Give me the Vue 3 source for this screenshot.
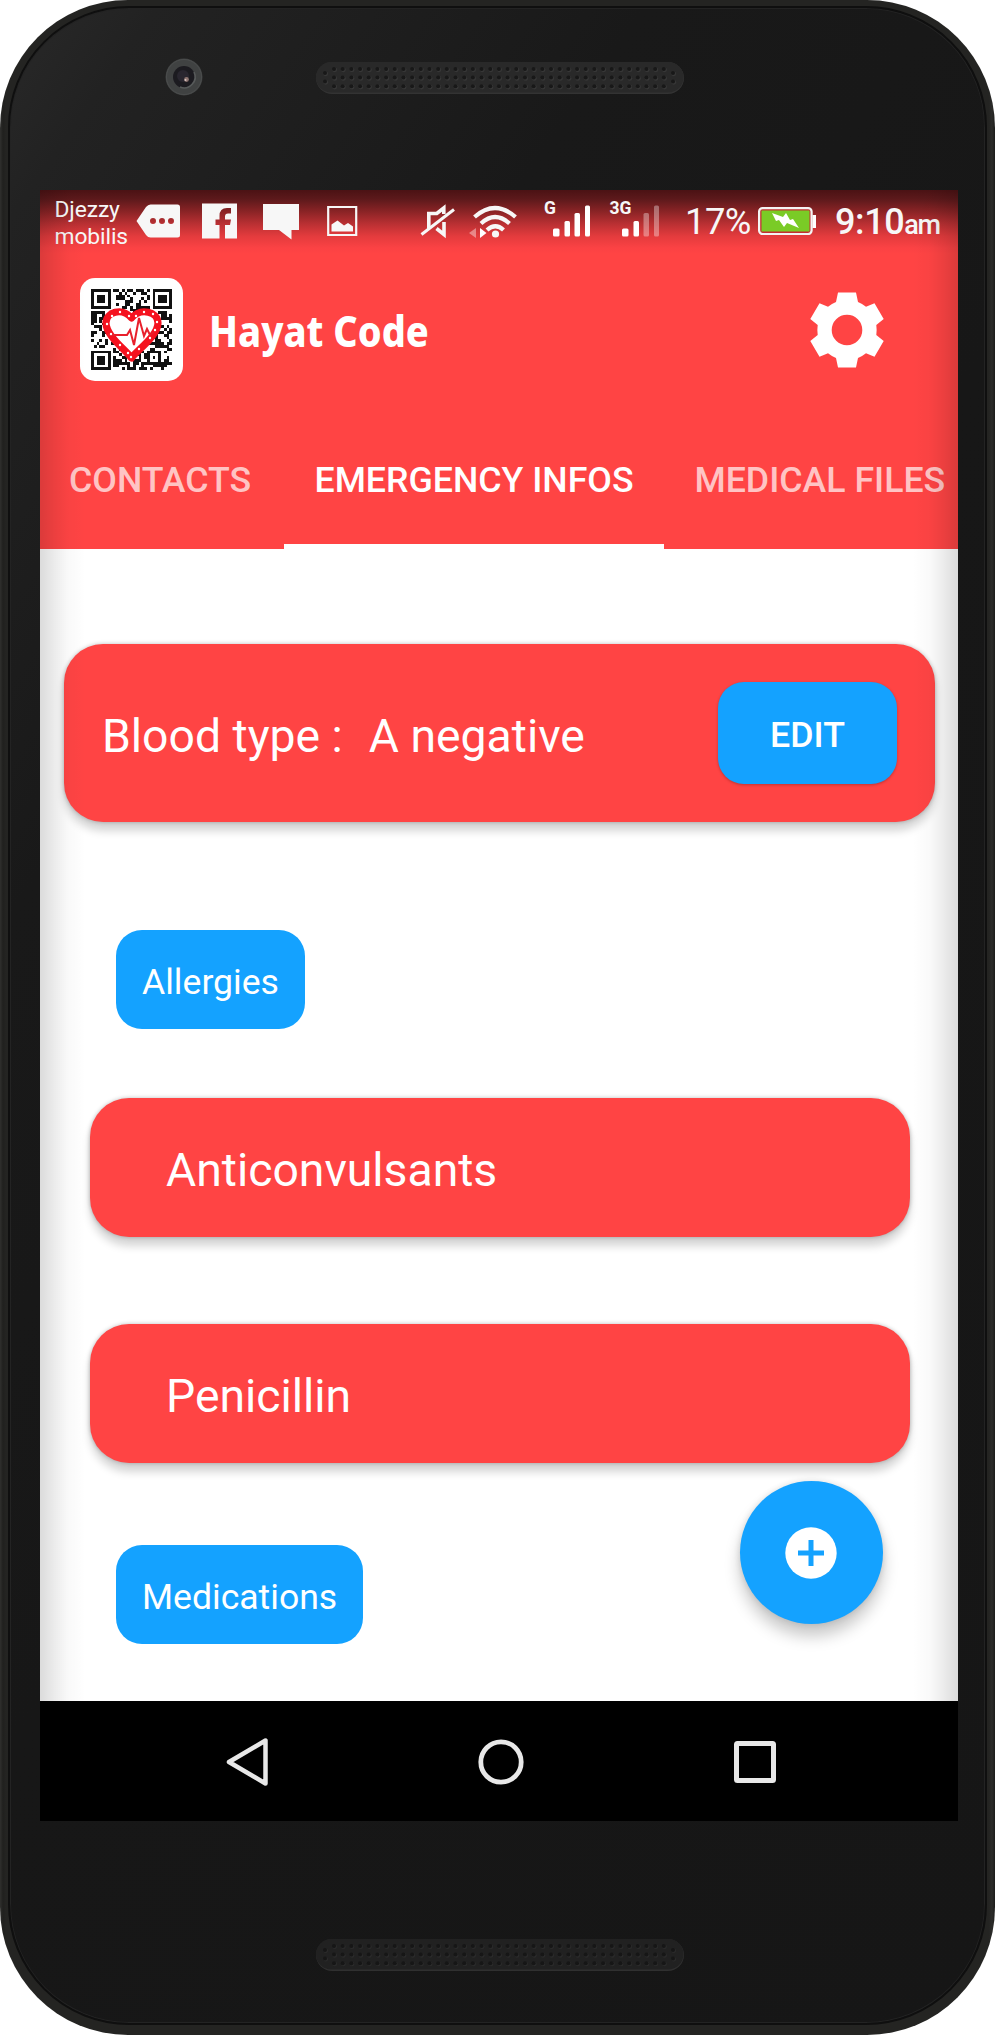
<script setup>
const speakerDots = []
for (let c = 0; c < 39; c++) {
  for (let r = 0; r < 3; r++) speakerDots.push([18 + c * 8.68, 7 + r * 8.6])
}
speakerDots.push([9, 11], [9, 19.5], [357, 11], [357, 19.5])

const SIZE = 29
function finder(x, y) {
  const ring = Math.max(Math.abs(x - 3), Math.abs(y - 3))
  return ring === 3 || ring <= 1
}
function module(x, y) {
  if (x < 8 && y < 8) return x < 7 && y < 7 && finder(x, y)
  if (x > 20 && y < 8) return x > 21 && y < 7 && finder(x - 22, y)
  if (x < 8 && y > 20) return x < 7 && y > 21 && finder(x, y - 22)
  const a = Math.max(Math.abs(x - 22), Math.abs(y - 24))
  if (a <= 2) return a !== 1
  const h = Math.sin(x * 12.9898 + y * 78.233 + 3.1) * 43758.5453
  return h - Math.floor(h) > 0.48
}
let qrPath = ''
for (let y = 0; y < SIZE; y++) {
  for (let x = 0; x < SIZE; x++) if (module(x, y)) qrPath += `M${x} ${y}h1v1h-1z`
}

const tabs = [
  { label: 'CONTACTS', active: false },
  { label: 'EMERGENCY INFOS', active: true },
  { label: 'MEDICAL FILES', active: false },
]
const allergies = ['Anticonvulsants', 'Penicillin']
const heartDots = [[9, 7], [17, 3], [26, 7], [33, 7], [41, 3], [50, 5], [54, 13], [4, 15], [8, 25], [17, 36], [25, 44], [28, 48], [36, 40], [47, 29], [52, 21]]
</script>

<template>
  <div class="phone">
    <div class="face">
      <div class="bezel top">
        <svg class="camera" width="38" height="38" viewBox="0 0 38 38">
          <circle cx="19" cy="19" r="18.5" fill="#404242" />
          <circle cx="19" cy="19" r="17.5" fill="none" stroke="#4b4d4d" stroke-width="1" />
          <circle cx="19" cy="19" r="11" fill="#1c1b20" />
          <path d="M29 14a11 11 0 0 1-14 15" fill="none" stroke="#585b5b" stroke-width="1.6" />
          <circle cx="18" cy="18" r="6" fill="#29262f" />
          <circle cx="21.5" cy="21.5" r="2.4" fill="#8d7470" />
          <circle cx="20.5" cy="22" r="1" fill="#d8c8c4" />
        </svg>
        <svg class="speaker" width="368" height="32" viewBox="0 0 368 32">
          <rect width="368" height="32" rx="16" fill="#333" />
          <rect width="367.500" height="30.500" rx="15.200" fill="#292929" />
          <g v-for="(d, i) in speakerDots" :key="i">
            <circle :cx="d[0] + .7" :cy="d[1] + .8" r="2.4" fill="#373737" />
            <circle :cx="d[0]" :cy="d[1]" r="2" fill="#181818" />
          </g>
        </svg>
      </div>

      <div class="screen">
        <header class="header">
          <div class="status">
            <div class="carrier">Djezzy<br />mobilis</div>
            <svg class="left-icons" width="222" height="40" viewBox="136 200 222 40">
              <path fill="#f7f7f7" fill-rule="evenodd" d="M136.500 221l9.500-14q2-2.500 4.500-2.500h27q2.500 0 2.500 2.500v28q0 2.500-2.500 2.500h-27q-2.500 0-4.500-2.500zM156 221a3 3 0 1 0-6 0 3 3 0 0 0 6 0zM165 221a3 3 0 1 0-6 0 3 3 0 0 0 6 0zM174 221a3 3 0 1 0-6 0 3 3 0 0 0 6 0z" />
              <path fill="#f7f7f7" fill-rule="evenodd" d="M202 203.500h35v35h-12v-13.500h5l1-5.500h-6v-3q0-3 3-3h3v-5.500h-4q-7.500 0-7.500 8v3.500h-4v5.500h4v13.500h-17.500z" />
              <path fill="#f7f7f7" d="M263 204h36v26h-7.500v9.500l-12.500-9.500h-16z" />
              <path fill="none" stroke="#f7f7f7" stroke-width="2.200" d="M328.200 207h28v28h-28z" />
              <path fill="#f7f7f7" d="M331.500 231.500v-7l6-4 6.500 5 4-2.500 5 3.500v5z" />
            </svg>
            <svg class="right-icons" width="242" height="42" viewBox="420 198 242 42">
              <g fill="none" stroke="#f7f7f7" stroke-width="3.600">
                <path d="M428.800 229v-15.500h8l7-5.500v6M444 222v12.500l-7.500-6" />
                <path d="M421.500 234.500L454 209.500" stroke-width="3" />
                <g stroke-width="4.200">
                  <path d="M474.500 217q20.500-18 41 0" />
                  <path d="M481 223.500q14-13 28.500 0" />
                  <path d="M487 230q8.500-7.500 16.500 0" />
                </g>
              </g>
              <circle cx="495.500" cy="234" r="3.600" fill="#f7f7f7" />
              <path d="M480 228l6.500 5-6.500 5z" fill="#fff" />
              <path d="M476 228l-7 5 7 5z" fill="#fff" opacity=".4" />
              <g fill="#fff">
                <rect x="553" y="228.500" width="6.500" height="8" rx="1.500" />
                <rect x="564.500" y="221" width="5.500" height="15.500" rx="1.500" />
                <rect x="574.500" y="213" width="5.500" height="23.500" rx="1.500" />
                <rect x="585" y="205.500" width="5" height="31" rx="1.500" />
                <rect x="622" y="228.500" width="6.500" height="8" rx="1.500" />
                <rect x="633.500" y="221" width="5.500" height="15.500" rx="1.500" />
                <rect x="643.500" y="213" width="5.500" height="23.500" rx="1.500" opacity=".35" />
                <rect x="654" y="205.500" width="5" height="31" rx="1.500" opacity=".35" />
              </g>
              <text class="net" x="544" y="213.500">G</text>
              <text class="net" x="609.500" y="213.500">3G</text>
            </svg>
            <div class="percent">17%</div>
            <svg class="battery" width="58" height="28" viewBox="0 0 58 28">
              <rect x="1.100" y="1.100" width="52.500" height="26" rx="3.500" fill="#c32e31" stroke="#f4f4f4" stroke-width="2.200" />
              <rect x="3.500" y="3.500" width="48" height="21" fill="#7acb26" />
              <path d="M54.500 8h3.500v13h-3.500z" fill="#fff" />
              <path d="M14 6l11 4 3-4 4 7 3-1 6 9-12-5-3 4-5-7-3 1z" fill="#fff" />
            </svg>
            <div class="time">9:10<span>am</span></div>
          </div>

          <div class="appbar">
            <svg class="logo" width="103" height="103" viewBox="0 0 103 103">
              <rect width="103" height="103" rx="15" fill="#fff" />
              <path transform="translate(11 11) scale(2.8)" :d="qrPath" fill="#111" shape-rendering="crispEdges" />
              <g transform="translate(23 31)">
                <path d="M28.500 49C24 42 3 27 3 14 3 3 19-2 28.500 9 38-2 55 3 55 14 55 27 33 42 28.500 49z" fill="#fff" stroke="#f5121f" stroke-width="7.200" stroke-linejoin="round" />
                <path d="M5 26h19l3-5 4 15 5-27 5 18 3-7 3 6 4-3" fill="none" stroke="#e8202c" stroke-width="2" />
                <circle v-for="(d, i) in heartDots" :key="i" :cx="d[0]" :cy="d[1]" r="1.200" fill="#fff" />
              </g>
            </svg>
            <h1>Hayat Code</h1>
            <svg class="gear" width="76" height="76" viewBox="-38 -38 76 76">
              <path fill="#fff" fill-rule="evenodd" d="M-9-37.500H9L11-28Q15-26.500 19-23.300L27.500-26.700 36.700-11 29.300-5Q30 0 29.300 5L36.700 11 27.500 26.700 19 23.300Q15 26.500 11 28L9 37.500H-9L-11 28Q-15 26.500-19 23.300L-27.500 26.700-36.700 11-29.300 5Q-30 0-29.300-5L-36.700-11-27.500-26.700-19-23.300Q-15-26.500-11-28ZM15.300 0a15.300 15.300 0 1 0-30.600 0 15.300 15.300 0 0 0 30.600 0z" />
            </svg>
          </div>

          <nav class="tabs">
            <div v-for="t in tabs" :key="t.label" class="tab" :class="{ active: t.active }">{{ t.label }}</div>
          </nav>
        </header>

        <main class="content">
          <section class="card blood">
            <span class="blood-text">Blood type :<b>A negative</b></span>
            <button class="edit">EDIT</button>
          </section>
          <div class="chip first">Allergies</div>
          <section v-for="a in allergies" :key="a" class="card item">{{ a }}</section>
          <div class="chip second">Medications</div>
          <button class="fab">
            <svg width="52" height="52" viewBox="0 0 52 52">
              <circle cx="26" cy="26" r="25.700" fill="#fff" />
              <path d="M26 13v26M13 26h26" stroke="#14a2ff" stroke-width="5" />
            </svg>
          </button>
        </main>
        <div class="edge-shade"></div>

        <div class="navbar">
          <svg width="42" height="50" viewBox="0 0 42 50"><path d="M39.500 3.500v43L3 25z" fill="none" stroke="#e8e8e8" stroke-width="4.500" stroke-linejoin="round" /></svg>
          <svg width="46" height="46" viewBox="0 0 46 46"><circle cx="23" cy="23" r="20.200" fill="none" stroke="#e8e8e8" stroke-width="4.800" /></svg>
          <svg width="42" height="42" viewBox="0 0 42 42"><rect x="2.500" y="2.500" width="37" height="37" rx="1" fill="none" stroke="#e8e8e8" stroke-width="5" /></svg>
        </div>
      </div>

      <div class="bezel bottom">
        <svg class="speaker" width="368" height="32" viewBox="0 0 368 32">
          <rect width="368" height="32" rx="16" fill="#303030" />
          <rect width="367.500" height="30.500" rx="15.200" fill="#212121" />
          <g v-for="(d, i) in speakerDots" :key="i">
            <circle :cx="d[0] + .7" :cy="d[1] + .8" r="2.300" fill="#2b2b2b" />
            <circle :cx="d[0]" :cy="d[1]" r="2" fill="#161616" />
          </g>
        </svg>
      </div>
    </div>
  </div>
</template>

<style>
html, body { background: #fff; overflow: hidden; }
</style>

<style scoped>
.phone {
  box-sizing: border-box;
  width: 995px;
  height: 2035px;
  padding: 6px 8px 10px;
  border-radius: 128px;
  background: linear-gradient(90deg, #30302e 0, #20201e 3px, #242422 6px, #242422 989px, #2c2c2a 992px, #1c1c1a 995px);
  font-family: Roboto, "Liberation Sans", sans-serif;
  color: #fff;
}
.face {
  box-sizing: border-box;
  width: 979px;
  height: 2019px;
  border: 2px solid #0f0f0f;
  border-radius: 121px;
  box-shadow: inset 0 0 0 1px #232323;
  background: linear-gradient(125deg, #292929 0, #222 120px, #191919 520px, #171717 1000px, #161616 100%);
  padding: 0 30px;
}
.bezel { display: flex; align-items: flex-start; }
.top { height: 182px; }
.camera { margin: 50px 0 0 125px; }
.top .speaker { margin: 54px 0 0 113px; }
.bottom { justify-content: center; }
.bottom .speaker { margin-top: 118px; margin-left: 5px; }
.screen { position: relative; width: 918px; height: 1631px; background: #fff; overflow: hidden; }
.header {
  height: 359px;
  background: linear-gradient(180deg, #4b1214 0, #5c191b 9px, #8c2426 22px, #ba3033 34px, #e33b3d 46px, #fb4244 58px, #ff4444 64px);
}
.status { display: flex; align-items: flex-start; height: 64px; color: #f7f7f7; }
.carrier { width: 81px; margin: 6px 0 0 14.500px; font-size: 22.800px; line-height: 27px; letter-spacing: -.1px; }
.left-icons { flex: none; margin: 10px 0 0 .5px; }
.right-icons { flex: none; margin: 8px 0 0 62px; }
.net { font: 700 17.500px Roboto, sans-serif; fill: #f7f7f7; }
.percent { width: 74px; margin: 11px 0 0 23px; font-size: 36.300px; line-height: 42px; letter-spacing: -.5px; white-space: nowrap; }
.battery { margin: 17px 0 0 -1px; flex: none; }
.time { margin: 11px 0 0 19px; font-size: 36px; line-height: 42px; font-weight: 500; letter-spacing: -.4px; white-space: nowrap; }
.time span { font-size: 27px; letter-spacing: -1.300px; }
.appbar { display: flex; align-items: center; height: 151px; }
.logo { margin: 0 0 0 40px; }
h1 {
  flex: 1;
  margin: 3px 0 0 26px;
  font: 800 42.500px/50px "Noto Sans", "Open Sans", sans-serif;
  transform: scaleX(.892);
  transform-origin: 0 50%;
  white-space: nowrap;
}
.gear { margin-right: 73px; }
.tabs { display: flex; height: 144px; width: 960px; }
.tab {
  box-sizing: border-box;
  padding: 54px 0 0 30.500px;
  font-size: 35.700px;
  line-height: 42px;
  font-weight: 500;
  color: rgba(255, 255, 255, .7);
  white-space: nowrap;
}
.tab:first-child { padding-left: 29px; width: 244px; }
.tab.active { width: 380px; color: #fff; border-bottom: 5px solid #fff; }
.content { position: relative; display: flex; flex-direction: column; align-items: flex-start; height: 1152px; }
.card {
  box-sizing: border-box;
  background: #ff4444;
  border-radius: 39px;
  box-shadow: 0 9px 8px rgba(0, 0, 0, .17), 0 0 4px rgba(0, 0, 0, .26);
  font-size: 46.300px;
  line-height: 54px;
}
.blood { display: flex; align-items: center; justify-content: space-between; width: 871px; height: 178px; margin: 95px 0 0 24px; padding: 0 38px; }
.blood-text { margin-top: 6px; white-space: nowrap; }
.blood-text b { margin-left: 26px; font-weight: 400; }
.edit {
  width: 179px;
  height: 102px;
  border: 0;
  padding: 4px 0 0;
  border-radius: 26px;
  background: #14a2ff;
  color: #fff;
  font: 500 35.700px/42px Roboto, sans-serif;
  box-shadow: 0 1px 3px rgba(0, 0, 0, .25);
}
.chip { box-sizing: border-box; height: 99px; padding: 31px 26px 0; border-radius: 26px; background: #14a2ff; font-size: 35.600px; line-height: 42px; }
.first { margin: 108px 0 69px 76px; }
.item { width: 820px; height: 139px; margin: 0 0 87px 50px; padding: 45px 76px 0; }
.second { margin: -5px 0 0 76px; }
.fab {
  position: absolute;
  left: 699.500px;
  top: 932px;
  display: flex;
  align-items: center;
  justify-content: center;
  width: 143px;
  height: 143px;
  padding: 0;
  border: 0;
  border-radius: 50%;
  background: #14a2ff;
  box-shadow: 0 12px 16px rgba(0, 0, 0, .22), 0 0 6px rgba(0, 0, 0, .12);
}
.edge-shade {
  position: absolute;
  inset: 0 0 120px;
  pointer-events: none;
  background:
    linear-gradient(90deg, rgba(0, 0, 0, .14), rgba(0, 0, 0, .08) 14px, rgba(0, 0, 0, .025) 28px, transparent 45px),
    linear-gradient(270deg, rgba(0, 0, 0, .14), rgba(0, 0, 0, .08) 14px, rgba(0, 0, 0, .025) 28px, transparent 45px);
}
.navbar { display: flex; align-items: center; height: 120px; padding: 2px 0 0 186px; box-sizing: border-box; background: #000; }
.navbar svg:nth-child(2) { margin: 0 210px 0 209.500px; }
</style>
